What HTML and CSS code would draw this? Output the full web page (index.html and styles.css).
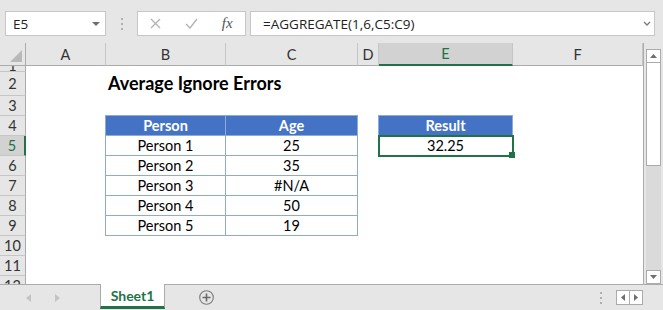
FILE: index.html
```html
<!DOCTYPE html>
<html lang="en">
<head>
    <meta charset="UTF-8">
    <meta name="viewport" content="width=device-width, initial-scale=1.0">
    <title>Average Ignore Errors</title>
    <link rel="stylesheet" href="styles.css">
</head>
<body>
    <div class="excel">
        <div class="formula-bar">
            <div class="name-box">
                <span>E5</span>
                <svg width="8" height="4" viewBox="0 0 8 4"><path d="M0 0h8L4 4z" fill="#6e6e6e"/></svg>
            </div>
            <div class="grip">
                <svg width="2" height="12" viewBox="0 0 2 12"><rect y="0" width="2" height="2" fill="#b0b0b0"/><rect y="5" width="2" height="2" fill="#b0b0b0"/><rect y="10" width="2" height="2" fill="#b0b0b0"/></svg>
            </div>
            <div class="fx-box">
                <span class="fx-btn">
                    <svg width="11" height="11" viewBox="0 0 11 11"><path d="M1 1l9 9M10 1l-9 9" stroke="#b4b4b4" stroke-width="1.4" fill="none"/></svg>
                </span>
                <span class="fx-btn">
                    <svg width="13" height="11" viewBox="0 0 13 11"><path d="M1 6l4 4 7-9" stroke="#b4b4b4" stroke-width="1.4" fill="none"/></svg>
                </span>
                <span class="fx-btn fx">fx</span>
            </div>
            <div class="formula-input">
                <span>=AGGREGATE(1,6,C5:C9)</span>
                <svg width="8" height="5" viewBox="0 0 8 5"><path d="M1 1l3 3 3-3" stroke="#7a7a7a" stroke-width="1.3" fill="none"/></svg>
            </div>
        </div>

        <div class="work">
            <div class="sheet">
                <div class="corner">
                    <svg width="12" height="12" viewBox="0 0 12 12"><path d="M12 0v12H0z" fill="#b9b9b9"/></svg>
                </div>
                <div class="ch">A</div>
                <div class="ch">B</div>
                <div class="ch">C</div>
                <div class="ch">D</div>
                <div class="ch active">E</div>
                <div class="ch">F</div>

                <div class="rh first">1</div>
                <div class="rh">2</div>
                <div class="rh">3</div>
                <div class="rh">4</div>
                <div class="rh active">5</div>
                <div class="rh">6</div>
                <div class="rh">7</div>
                <div class="rh">8</div>
                <div class="rh">9</div>
                <div class="rh">10</div>
                <div class="rh">11</div>
                <div class="rh">12</div>

                <div class="title">Average Ignore Errors</div>

                <div class="people">
                    <div class="th">Person</div>
                    <div class="th">Age</div>
                    <div>Person 1</div>
                    <div>25</div>
                    <div>Person 2</div>
                    <div>35</div>
                    <div>Person 3</div>
                    <div>#N/A</div>
                    <div>Person 4</div>
                    <div>50</div>
                    <div>Person 5</div>
                    <div>19</div>
                </div>

                <div class="result">
                    <div class="th">Result</div>
                    <div class="selected">32.25</div>
                </div>
            </div>

            <div class="vscroll">
                <div class="sb-btn">
                    <svg width="7" height="4" viewBox="0 0 7 4"><path d="M0 4h7L3.5 0z" fill="#6e6e6e"/></svg>
                </div>
                <div class="sb-thumb"></div>
                <div class="sb-track"></div>
                <div class="sb-btn">
                    <svg width="7" height="4" viewBox="0 0 7 4"><path d="M0 0h7L3.5 4z" fill="#6e6e6e"/></svg>
                </div>
            </div>
        </div>

        <div class="tabs">
            <div class="tab-nav">
                <svg width="5" height="8" viewBox="0 0 5 8"><path d="M5 0v8L0 4z" fill="#c4c4c4"/></svg>
                <svg width="5" height="8" viewBox="0 0 5 8"><path d="M0 0v8l5-4z" fill="#c4c4c4"/></svg>
            </div>
            <div class="sheet-tab">Sheet1</div>
            <div class="add-sheet">
                <svg width="15" height="15" viewBox="0 0 15 15"><circle cx="7.5" cy="7.5" r="6.8" stroke="#7a7a7a" stroke-width="1.1" fill="none"/><path d="M7.5 3.5v8M3.5 7.5h8" stroke="#6a6a6a" stroke-width="1.6"/></svg>
            </div>
            <div class="tabs-space"></div>
            <div class="tabs-grip">
                <svg width="2" height="12" viewBox="0 0 2 12"><rect y="0" width="2" height="2" fill="#b0b0b0"/><rect y="5" width="2" height="2" fill="#b0b0b0"/><rect y="10" width="2" height="2" fill="#b0b0b0"/></svg>
            </div>
            <div class="hscroll">
                <div class="hs-btn">
                    <svg width="4" height="7" viewBox="0 0 4 7"><path d="M4 0v7L0 3.5z" fill="#6e6e6e"/></svg>
                </div>
                <div class="hs-btn">
                    <svg width="4" height="7" viewBox="0 0 4 7"><path d="M0 0v7l4-3.5z" fill="#6e6e6e"/></svg>
                </div>
            </div>
        </div>
    </div>
</body>
</html>
```

FILE: styles.css
```css
body {
    margin: 0;
    font-family: Lato, "Open Sans", sans-serif;
}
.excel {
    width: 663px;
    height: 310px;
    display: flex;
    flex-direction: column;
    background-color: #e6e6e6;
    overflow: hidden;
}

/* formula bar */
.formula-bar {
    height: 43px;
    box-sizing: border-box;
    padding: 11px 8px 7px 5px;
    display: flex;
    font-family: "Open Sans", sans-serif;
    font-size: 13.5px;
    color: #222;
}
.name-box {
    width: 101px;
    box-sizing: border-box;
    background-color: #fff;
    border: 1px solid #c6c6c6;
    display: flex;
    align-items: center;
    justify-content: space-between;
    padding: 0 5px 0 7px;
}
.grip {
    width: 31px;
    display: flex;
    align-items: center;
    justify-content: center;
}
.fx-box {
    width: 109px;
    box-sizing: border-box;
    background-color: #fff;
    border: 1px solid #c6c6c6;
    display: flex;
    align-items: center;
}
.fx-btn {
    width: 36px;
    display: flex;
    justify-content: center;
}
.fx {
    font-family: "Liberation Serif", serif;
    font-style: italic;
    font-size: 15px;
    color: #555;
}
.formula-input {
    flex: 1;
    margin-left: 4px;
    background-color: #fff;
    border: 1px solid #c6c6c6;
    display: flex;
    align-items: center;
    justify-content: space-between;
    padding: 0 3px 0 12px;
}

/* sheet */
.work {
    display: flex;
    height: 241px;
}
.sheet {
    width: 644px;
    box-sizing: border-box;
    display: grid;
    grid-template-columns: 26px 80px 120px 132px 21px 134px 130px;
    grid-template-rows: 23px 6px 24px repeat(10, 20px);
    background-color: #fff;
    border-right: 1px solid #ababab;
    overflow: hidden;
    font-size: 14.5px;
    color: #000;
}
.corner, .ch, .rh {
    box-sizing: border-box;
    background-color: #e6e6e6;
    display: flex;
    align-items: center;
    justify-content: center;
    color: #333;
    overflow: hidden;
}
.corner {
    border-right: 1px solid #ababab;
    border-bottom: 1px solid #ababab;
    align-items: flex-end;
    justify-content: flex-end;
    padding: 0 3px 3px 0;
}
.ch {
    border-right: 1px solid #c6c6c6;
    border-bottom: 1px solid #ababab;
}
.ch.active {
    background-color: #d2d2d2;
    color: #217346;
    border-bottom: 2px solid #217346;
}
.rh {
    grid-column: 1;
    border-right: 1px solid #ababab;
    border-bottom: 1px solid #c6c6c6;
}
.rh.first {
    align-items: flex-end;
    line-height: 10px;
}
.rh.active {
    background-color: #d2d2d2;
    color: #217346;
    border-right: 2px solid #217346;
}

.title {
    grid-column: 3 / 6;
    grid-row: 3;
    display: flex;
    align-items: flex-end;
    padding: 0 0 2px 2px;
    font-size: 18px;
    font-weight: bold;
    white-space: nowrap;
}

.people, .result {
    margin: -1px 0 0 -1px;
    border-top: 1px solid #8ea9db;
    border-left: 1px solid #8ea9db;
    display: grid;
    grid-auto-rows: 20px;
}
.people {
    grid-column: 3 / 5;
    grid-row: 5 / 11;
    grid-template-columns: 120px 132px;
}
.result {
    grid-column: 6;
    grid-row: 5 / 7;
    grid-template-columns: 134px;
}
.people > div, .result > div {
    box-sizing: border-box;
    border-right: 1px solid #8ea9db;
    border-bottom: 1px solid #8ea9db;
    display: flex;
    align-items: center;
    justify-content: center;
}
.th {
    background-color: #4472c4;
    color: #fff;
    font-weight: bold;
}
.result .selected {
    position: relative;
    outline: 2px solid #217346;
    outline-offset: -1px;
}
.result .selected::after {
    content: "";
    position: absolute;
    right: -3px;
    bottom: -3px;
    width: 6px;
    height: 6px;
    background-color: #217346;
}

/* vertical scroll bar */
.vscroll {
    width: 19px;
    box-sizing: border-box;
    padding: 6px 2px 0 2px;
    display: flex;
    flex-direction: column;
}
.sb-btn {
    height: 14px;
    box-sizing: border-box;
    background-color: #fff;
    border: 1px solid #ababab;
    display: flex;
    align-items: center;
    justify-content: center;
}
.sb-thumb {
    height: 103px;
    box-sizing: border-box;
    background-color: #fff;
    border: 1px solid #ababab;
    border-top: none;
}
.sb-track {
    flex: 1;
    background-color: #dadada;
}

/* sheet tabs */
.tabs {
    height: 26px;
    box-sizing: border-box;
    border-top: 1px solid #ababab;
    display: flex;
}
.tab-nav {
    width: 100px;
    display: flex;
    align-items: center;
    gap: 24px;
    padding-left: 26px;
    box-sizing: border-box;
}
.sheet-tab {
    width: 65px;
    margin: -1px 0 1px;
    box-sizing: border-box;
    background-color: #fff;
    border-left: 1px solid #ababab;
    border-right: 1px solid #ababab;
    border-bottom: 3px solid #217346;
    display: flex;
    align-items: center;
    justify-content: center;
    font-size: 14px;
    font-weight: bold;
    color: #217346;
}
.add-sheet {
    margin-left: 34px;
    display: flex;
    align-items: center;
}
.tabs-space {
    flex: 1;
}
.tabs-grip {
    display: flex;
    align-items: center;
    margin-right: 14px;
}
.hscroll {
    display: flex;
    align-items: center;
    margin-right: 20px;
}
.hs-btn {
    width: 14px;
    height: 15px;
    box-sizing: border-box;
    background-color: #fff;
    border: 1px solid #ababab;
    display: flex;
    align-items: center;
    justify-content: center;
}
.hs-btn + .hs-btn {
    width: 13px;
    border-left: none;
}
```
